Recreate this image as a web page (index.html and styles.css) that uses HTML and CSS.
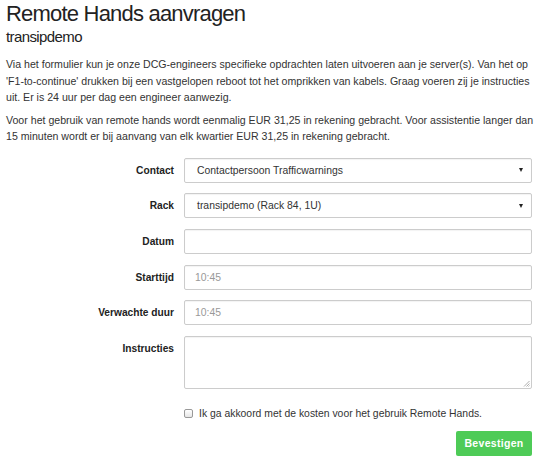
FILE: index.html
```html
<!DOCTYPE html>
<html lang="nl">
<head>
<meta charset="utf-8">
<title>Remote Hands aanvragen</title>
<link rel="stylesheet" href="styles.css">
</head>
<body>
<div class="page">
  <h1 class="title">Remote Hands aanvragen</h1>
  <h2 class="subtitle">transipdemo</h2>
  <p class="text">Via het formulier kun je onze DCG-engineers specifieke opdrachten laten uitvoeren aan je server(s). Van het op 'F1-to-continue' drukken bij een vastgelopen reboot tot het omprikken van kabels. Graag voeren zij je instructies uit. Er is 24 uur per dag een engineer aanwezig.</p>
  <p class="text">Voor het gebruik van remote hands wordt eenmalig EUR 31,25 in rekening gebracht. Voor assistentie langer dan 15 minuten wordt er bij aanvang van elk kwartier EUR 31,25 in rekening gebracht.</p>

  <form class="form">
    <label class="label">Contact</label>
    <div class="select">
      <span>Contactpersoon Trafficwarnings</span>
      <span class="caret"></span>
    </div>

    <label class="label">Rack</label>
    <div class="select">
      <span>transipdemo (Rack 84, 1U)</span>
      <span class="caret"></span>
    </div>

    <label class="label">Datum</label>
    <div class="input"></div>

    <label class="label">Starttijd</label>
    <div class="input placeholder">10:45</div>

    <label class="label">Verwachte duur</label>
    <div class="input placeholder">10:45</div>

    <label class="label">Instructies</label>
    <div class="textarea">
      <svg class="grip" width="7" height="7" viewBox="0 0 7 7"><path d="M6.5 1 L1 6.5 M6.5 3.5 L3.5 6.5 M6.5 5.5 L5.5 6.5" stroke="#999" stroke-width="0.8" fill="none"/></svg>
    </div>

    <div class="spacer"></div>
    <div class="check">
      <span class="box"></span>
      <span>Ik ga akkoord met de kosten voor het gebruik Remote Hands.</span>
    </div>

    <div class="spacer"></div>
    <div class="actions">
      <span class="btn">Bevestigen</span>
    </div>
  </form>
</div>
</body>
</html>
```
FILE: styles.css
```css
* { box-sizing: border-box; }
html, body { margin: 0; padding: 0; background: #fff; }
body {
  font-family: "Liberation Sans", Arial, sans-serif;
  color: #333;
}
.page {
  width: 540px;
  padding: 0 6px 0 6px;
}
.title {
  margin: 0;
  font-size: 22px;
  line-height: 28px;
  font-weight: normal;
  letter-spacing: -0.8px;
  color: #222;
}
.subtitle {
  margin: 0 0 10px 0;
  font-size: 15px;
  line-height: 18px;
  font-weight: normal;
  letter-spacing: -0.6px;
  color: #222;
}
.text {
  margin: 0 0 6px 0;
  font-size: 10.6px;
  line-height: 16.5px;
}
.form {
  margin-top: 13px;
  display: grid;
  grid-template-columns: 168px 348px;
  column-gap: 10px;
  row-gap: 10.7px;
  font-size: 10.4px;
}
.label {
  font-weight: bold;
  font-size: 10.2px;
  text-align: right;
  height: 25px;
  line-height: 25px;
  color: #222;
}
.select, .input, .textarea {
  height: 25px;
  border: 1px solid #ccc;
  border-radius: 2px;
  background: #fff;
  box-shadow: inset 0 1px 1px rgba(0,0,0,0.05);
}
.select {
  display: flex;
  align-items: center;
  justify-content: space-between;
  padding: 0 8px 0 12px;
  color: #333;
}
.caret {
  width: 0;
  height: 0;
  border-left: 2.5px solid transparent;
  border-right: 2.5px solid transparent;
  border-top: 4px solid #222;
}
.input {
  padding: 0 10px;
  line-height: 23px;
}
.placeholder { color: #999; }
.textarea {
  height: 53px;
  position: relative;
}
.grip { position: absolute; right: 1px; bottom: 1px; }
.check {
  display: flex;
  align-items: center;
  gap: 6px;
  margin-top: 6px;
  height: 16px;
}
.box {
  width: 9px;
  height: 9px;
  border: 1px solid #999;
  border-radius: 2px;
  background: linear-gradient(#fff, #e6e6e6);
}
.actions {
  display: flex;
  justify-content: flex-end;
  margin-top: -1px;
}
.btn {
  display: inline-block;
  width: 76px;
  height: 25px;
  line-height: 25px;
  text-align: center;
  background: #4ecb57;
  color: #fff;
  font-weight: bold;
  font-size: 10.5px;
  border-radius: 2px;
  letter-spacing: 0.3px;
}
```
